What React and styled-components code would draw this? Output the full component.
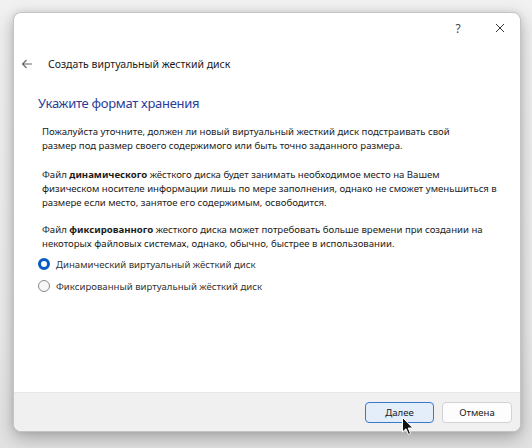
import React from "react";
import styled, { createGlobalStyle } from "styled-components";

const Global = createGlobalStyle`
  html, body { margin: 0; padding: 0; }
  body {
    width: 532px; height: 448px; overflow: hidden;
    background: linear-gradient(180deg, #f1f1f1 0%, #ebebeb 70%, #e2e2e2 100%);
    font-family: "Noto Sans", "Open Sans", sans-serif;
  }
`;

const Stage = styled.div`
  padding: 12px 0 0 13px;
  position: relative;
`;

const Window = styled.div`
  width: 506px;
  height: 418px;
  background: #ffffff;
  border: 1px solid #c4c4c4;
  border-radius: 8px;
  box-shadow: 0 6px 18px rgba(0, 0, 0, 0.28), 0 0 6px rgba(0, 0, 0, 0.08);
  display: flex;
  flex-direction: column;
  overflow: hidden;
`;

const TitleBar = styled.div`
  height: 30px;
  display: flex;
  justify-content: flex-end;
  align-items: center;
  padding-right: 10px;
  gap: 22px;
`;

const CaptionButton = styled.div`
  width: 20px;
  display: flex;
  justify-content: center;
  align-items: center;
  color: #444;
  font-size: 12px;
`;

const Header = styled.div`
  display: flex;
  align-items: center;
  height: 20px;
  margin-top: 11px;
  padding-left: 7px;
  gap: 15px;
`;

const HeaderTitle = styled.div`
  font-size: 10.5px;
  color: #1a1a1a;
`;

const Body = styled.div`
  flex: 1;
  padding: 0 0 0 24px;
`;

const Heading = styled.h1`
  margin: 20px 0 0 0;
  font-weight: 400;
  font-size: 13px;
  letter-spacing: -0.3px;
  color: #2a3c98;
  line-height: 18px;
`;

const Text = styled.div`
  padding-left: 4px;
  margin-top: ${(p) => p.$top}px;
  font-size: 9.6px;
  line-height: 14px;
  color: #1c1c1c;
  white-space: nowrap;
`;

const Line = styled.span`
  display: block;
`;

const Options = styled.div`
  margin-top: 6px;
  display: flex;
  flex-direction: column;
  gap: 8px;
`;

const Option = styled.label`
  display: flex;
  align-items: center;
  gap: 6px;
  height: 14px;
  font-size: 9.6px;
  color: #333;
`;

const Radio = styled.span`
  box-sizing: border-box;
  width: 12px;
  height: 12px;
  border-radius: 50%;
  border: ${(p) => (p.$checked ? "3.5px solid #0a5bc4" : "1px solid #8a8a8a")};
  background: ${(p) => (p.$checked ? "#ffffff" : "#f7f7f7")};
`;

const Footer = styled.div`
  height: 38px;
  background: #f0f0f0;
  border-top: 1px solid #e6e6e6;
  display: flex;
  justify-content: flex-end;
  align-items: center;
  padding-right: 8px;
  gap: 8px;
`;

const Button = styled.button`
  box-sizing: border-box;
  width: ${(p) => p.$w}px;
  height: 21px;
  border-radius: 4px;
  font-family: "Noto Sans", sans-serif;
  font-size: 9.6px;
  color: #1a1a1a;
  background: ${(p) => (p.$primary ? "#e3eefa" : "#fdfdfd")};
  border: 1px solid ${(p) => (p.$primary ? "#3a78c8" : "#d2d2d2")};
  padding: 0;
`;

const Cursor = styled.svg`
  position: absolute;
  left: 402px;
  top: 417px;
`;

export default function App() {
  return (
    <>
      <Global />
      <Stage>
        <Window>
          <TitleBar>
            <CaptionButton>?</CaptionButton>
            <CaptionButton>
              <svg width="10" height="10" viewBox="0 0 10 10">
                <path d="M1 1 L9 9 M9 1 L1 9" stroke="#333" strokeWidth="1" />
              </svg>
            </CaptionButton>
          </TitleBar>
          <Header>
            <svg width="12" height="10" viewBox="0 0 12 10">
              <path d="M11 5 H1.5 M5.5 1 L1.5 5 L5.5 9" stroke="#666" strokeWidth="1.1" fill="none" />
            </svg>
            <HeaderTitle>Создать виртуальный жесткий диск</HeaderTitle>
          </Header>
          <Body>
            <Heading>Укажите формат хранения</Heading>
            <Text $top={13}>
              <Line>Пожалуйста уточните, должен ли новый виртуальный жесткий диск подстраивать свой</Line>
              <Line>размер под размер своего содержимого или быть точно заданного размера.</Line>
            </Text>
            <Text $top={15}>
              <Line>Файл <b>динамического</b> жёсткого диска будет занимать необходимое место на Вашем</Line>
              <Line>физическом носителе информации лишь по мере заполнения, однако не сможет уменьшиться в</Line>
              <Line>размере если место, занятое его содержимым, освободится.</Line>
            </Text>
            <Text $top={13}>
              <Line>Файл <b>фиксированного</b> жесткого диска может потребовать больше времени при создании на</Line>
              <Line>некоторых файловых системах, однако, обычно, быстрее в использовании.</Line>
            </Text>
            <Options>
              <Option><Radio $checked />Динамический виртуальный жёсткий диск</Option>
              <Option><Radio />Фиксированный виртуальный жёсткий диск</Option>
            </Options>
          </Body>
          <Footer>
            <Button $primary $w={69}>Далее</Button>
            <Button $w={70}>Отмена</Button>
          </Footer>
        </Window>
        <Cursor width="12" height="19" viewBox="0 0 12 19">
          <path d="M0.5 0.5 L0.5 15 L4 11.8 L6.5 17.5 L8.6 16.6 L6.2 11 L10.8 11 Z" fill="#111" stroke="#fff" strokeWidth="1" />
        </Cursor>
      </Stage>
    </>
  );
}
